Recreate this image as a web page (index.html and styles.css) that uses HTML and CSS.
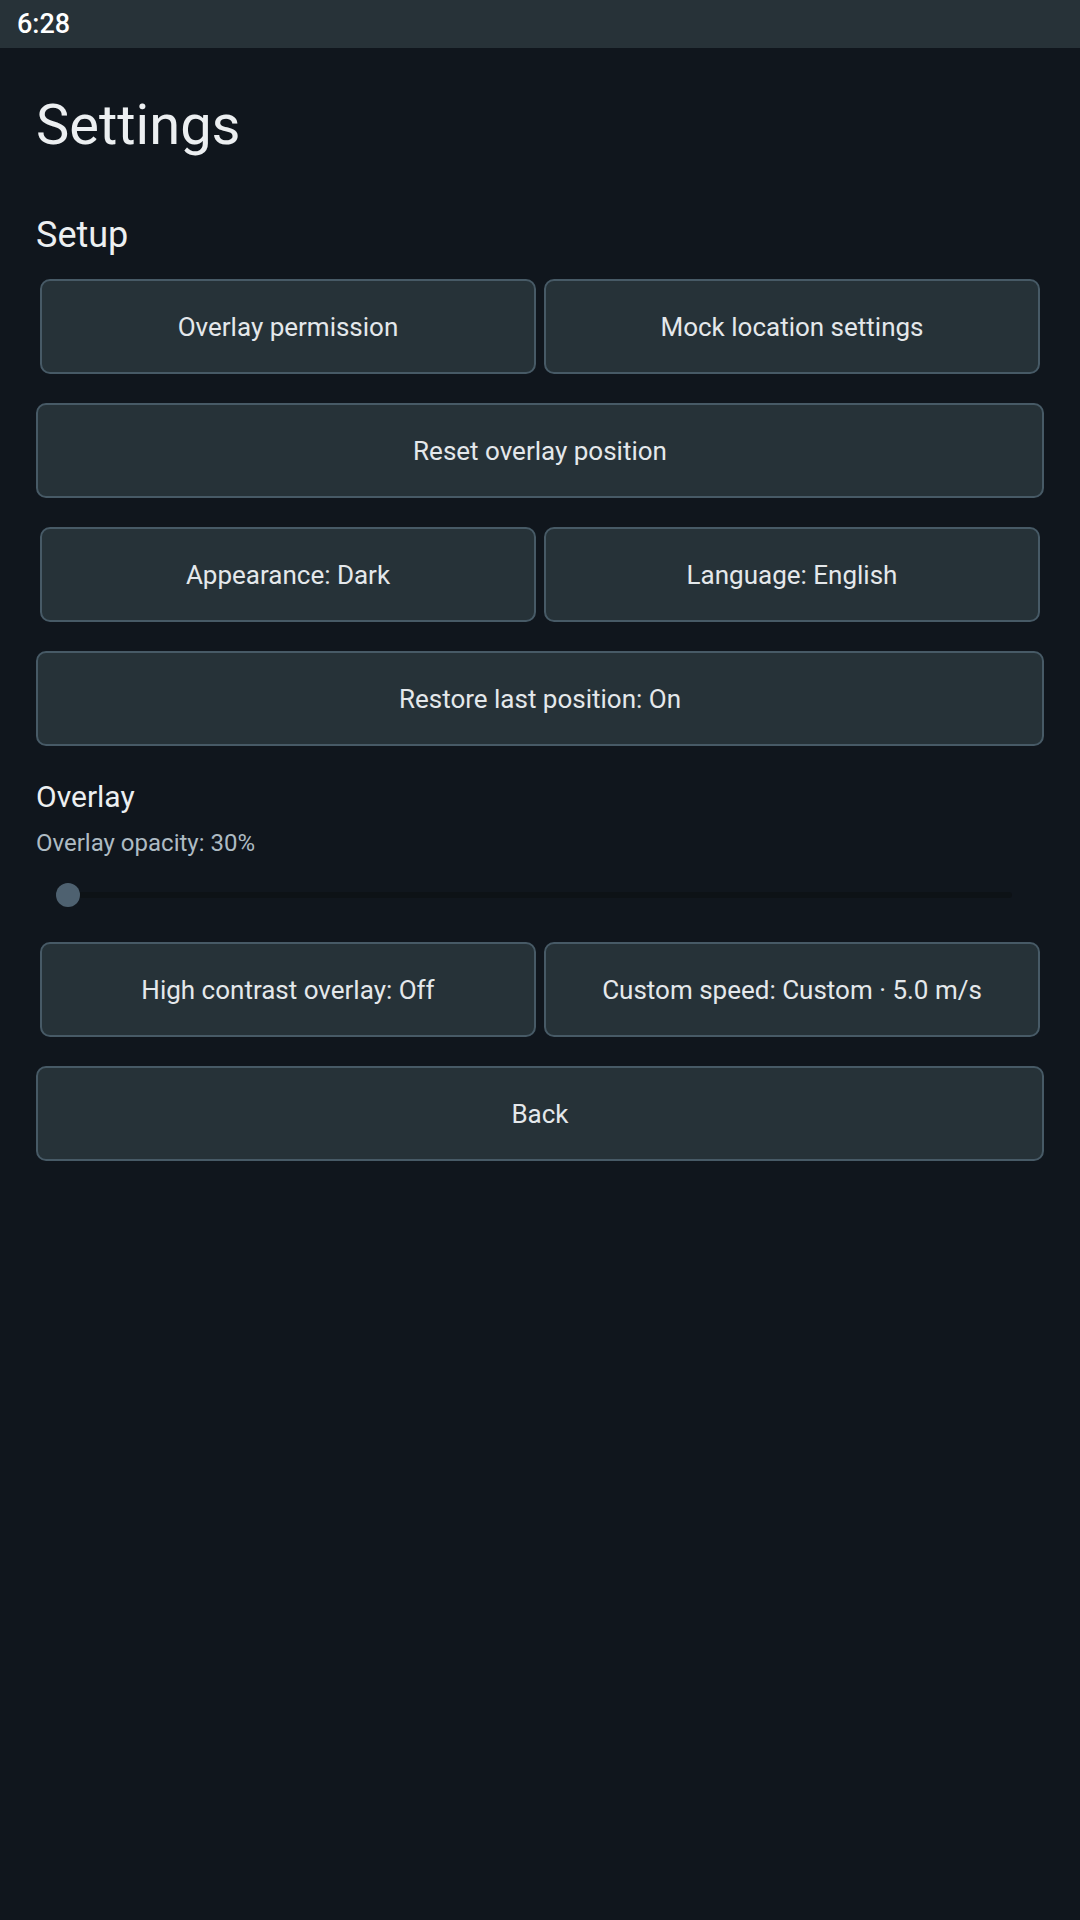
FILE: index.html
```html
<!DOCTYPE html>
<html lang="en">
  <head>
    <meta charset="UTF-8" />
    <meta name="viewport" content="width=device-width, initial-scale=1.0" />
    <title>Settings</title>
    <link rel="stylesheet" href="styles.css">
  </head>
  <body>
    <div class="status">6:28</div>
    <div class="page">
      <h1 class="title">Settings</h1>

      <h2 class="section">Setup</h2>
      <div class="pair first">
        <button class="btn">Overlay permission</button>
        <button class="btn">Mock location settings</button>
      </div>
      <button class="btn wide">Reset overlay position</button>
      <div class="pair">
        <button class="btn">Appearance: Dark</button>
        <button class="btn">Language: English</button>
      </div>
      <button class="btn wide">Restore last position: On</button>

      <h2 class="section small">Overlay</h2>
      <div class="label">Overlay opacity: 30%</div>
      <div class="slider">
        <div class="track">
          <div class="thumb"></div>
        </div>
      </div>
      <div class="pair after-slider">
        <button class="btn">High contrast overlay: Off</button>
        <button class="btn">Custom speed: Custom · 5.0 m/s</button>
      </div>
      <button class="btn wide">Back</button>
    </div>
  </body>
</html>
```

FILE: styles.css
```css
body {
  margin: 0;
  height: 1920px;
  background-color: #10161d;
  font-family: Roboto, "Noto Sans", sans-serif;
  color: #eceff1;
}
.status {
  height: 48px;
  display: flex;
  align-items: center;
  padding-left: 17px;
  background-color: #273238;
  color: #ffffff;
  font-size: 27px;
  font-weight: 500;
}
.page {
  display: flex;
  flex-direction: column;
  padding: 0 36px;
}
.title {
  margin: 44px 0 0 0;
  font-size: 56px;
  line-height: 66px;
  font-weight: 400;
}
.section {
  margin: 56px 0 0 0;
  font-size: 36px;
  line-height: 42px;
  font-weight: 400;
}
.section.small {
  margin-top: 33px;
  font-size: 30px;
  line-height: 35px;
}
.label {
  margin-top: 15px;
  font-size: 24px;
  line-height: 28px;
  color: #aebbc3;
}
.pair {
  display: flex;
  gap: 8px;
  padding: 0 4px;
  margin-top: 29px;
}
.pair.first {
  margin-top: 23px;
}
.pair.after-slider {
  margin-top: 23px;
}
.pair .btn {
  flex: 1;
}
.btn {
  box-sizing: border-box;
  height: 95px;
  border: 2px solid #475a66;
  border-radius: 10px;
  background-color: #263238;
  color: #e4e8eb;
  font-family: Roboto, "Noto Sans", sans-serif;
  font-size: 26px;
  padding: 0;
}
.wide {
  margin-top: 29px;
  width: 100%;
}
.slider {
  margin-top: 14px;
  height: 48px;
  padding: 0 32px;
  display: flex;
  align-items: center;
}
.track {
  position: relative;
  flex: 1;
  height: 6px;
  border-radius: 3px;
  background-color: #0d1216;
}
.thumb {
  position: absolute;
  left: -12px;
  top: -9px;
  width: 24px;
  height: 24px;
  border-radius: 50%;
  background-color: #4e6170;
}
```
